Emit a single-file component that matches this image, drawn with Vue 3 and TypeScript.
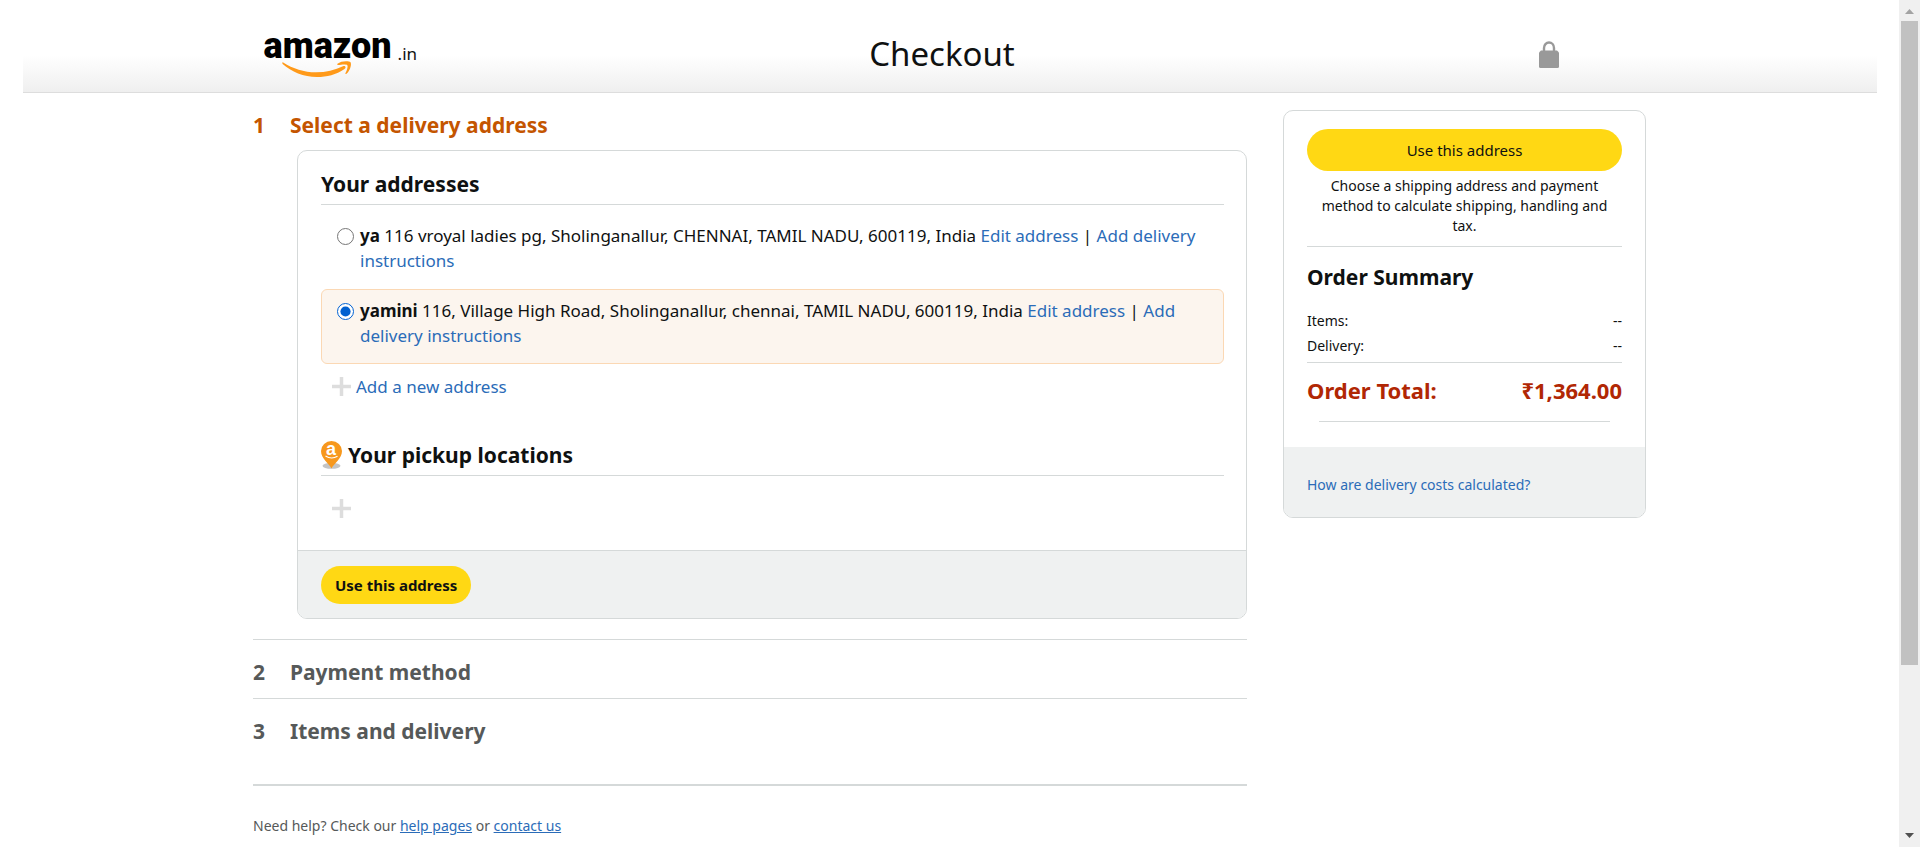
<script setup lang="ts">
import { ref } from 'vue'

interface Address {
  id: string
  name: string
  text: string
}

const addresses: Address[] = [
  { id: 'ya', name: 'ya', text: '116 vroyal ladies pg, Sholinganallur, CHENNAI, TAMIL NADU, 600119, India' },
  { id: 'yamini', name: 'yamini', text: '116, Village High Road, Sholinganallur, chennai, TAMIL NADU, 600119, India' },
]
const selected = ref<string>('yamini')

const nextSteps = [
  { number: 2, title: 'Payment method' },
  { number: 3, title: 'Items and delivery' },
]
</script>

<template>
  <div class="window">
    <div class="page">
      <header class="header">
        <div class="container header-row">
          <a class="logo" href="#" aria-label="amazon.in">
            <span class="logo-mark">
              <span class="logo-word">amazon</span>
              <svg class="smile" viewBox="0 0 70 16" width="70" height="16" aria-hidden="true">
                <path d="M1.200 1.500C11 7.800 22 11.300 34 11.300 44 11.300 53 9 61 5.200 63.500 4.200 64.500 6.800 62.500 8 54 13.800 45 16 35 16 21.500 16 9.500 10.800 0.600 3 0 2 .3 1 1.200 1.500Z" fill="#ff9a1a" />
                <path d="M55.500 2.800C59 -.3 67 -.3 68.500 1.300 70 3.500 67.500 10.500 64.500 12.800 63.700 13.300 63 13 63.400 12.200 64.600 9.800 66.300 5.500 65.300 4.200 64 3 59 3.700 56.200 4.100 55.300 4.200 54.800 3.300 55.500 2.800Z" fill="#ff9a1a" />
              </svg>
            </span>
            <span class="logo-tld">.in</span>
          </a>
          <h1>Checkout</h1>
          <svg class="lock" viewBox="0 0 20 27" width="20" height="27" role="img" aria-label="Secure">
            <path d="M5 11V7a5 5.500 0 0 1 10 0v4" fill="none" stroke="#999" stroke-width="2.400" />
            <path d="M2 9.500h16l2 2V25.500a1.500 1.500 0 0 1-1.500 1.500h-17A1.500 1.500 0 0 1 0 25.500V11.500Z" fill="#999" />
          </svg>
        </div>
      </header>

      <div class="container columns">
        <main>
          <h2 class="step step-active"><span class="number">1</span>Select a delivery address</h2>

          <section class="card address-card">
            <div class="card-body">
              <h3 class="title">Your addresses</h3>
              <div class="address-list">
                <div
                  v-for="a in addresses"
                  :key="a.id"
                  class="address"
                  :class="{ chosen: selected === a.id }"
                >
                  <input :id="a.id" v-model="selected" type="radio" name="address" :value="a.id" />
                  <div>
                    <label :for="a.id"><b>{{ a.name }}</b> {{ a.text }}</label>
                    {{ ' ' }}<a href="#">Edit address</a> | <a href="#">Add delivery instructions</a>
                  </div>
                </div>
              </div>
              <div class="add-row">
                <svg class="plus" viewBox="0 0 19 19" width="19" height="19" aria-hidden="true">
                  <path d="M9.500 0v19M0 9.500h19" stroke="#ddd" stroke-width="3.500" />
                </svg>
                <a href="#">Add a new address</a>
              </div>

              <h3 class="title pickup">
                <svg class="pin" viewBox="0 0 21 28" width="21" height="28" aria-hidden="true">
                  <ellipse cx="10.500" cy="24.800" rx="9" ry="3" fill="#c4c4c4" />
                  <path d="M10.500 27.500C8 22.500 0 17.500 0 10A10.500 10 0 0 1 21 10C21 17.500 13 22.500 10.500 27.500Z" fill="#f7981d" />
                  <text x="10" y="13.500" text-anchor="middle" class="pin-letter">a</text>
                  <path d="M4.500 15c4 2.600 8 2.600 12 .3" fill="none" stroke="#fff" stroke-width="1.200" />
                </svg>
                Your pickup locations
              </h3>
              <div class="add-row">
                <svg class="plus" viewBox="0 0 19 19" width="19" height="19" aria-hidden="true">
                  <path d="M9.500 0v19M0 9.500h19" stroke="#ddd" stroke-width="3.500" />
                </svg>
              </div>
            </div>
            <div class="card-foot">
              <button type="button" class="btn btn-small">Use this address</button>
            </div>
          </section>

          <h2 v-for="s in nextSteps" :key="s.number" class="step step-next">
            <span class="number">{{ s.number }}</span>{{ s.title }}
          </h2>

          <p class="help">Need help? Check our <a href="#">help pages</a> or <a href="#">contact us</a></p>
        </main>

        <aside class="card summary">
          <div class="summary-body">
            <button type="button" class="btn btn-wide">Use this address</button>
            <p class="note">Choose a shipping address and payment method to calculate shipping, handling and tax.</p>
            <h3>Order Summary</h3>
            <dl>
              <div class="line"><dt>Items:</dt><dd>--</dd></div>
              <div class="line"><dt>Delivery:</dt><dd>--</dd></div>
              <div class="line total"><dt>Order Total:</dt><dd>₹1,364.00</dd></div>
            </dl>
            <hr />
          </div>
          <div class="summary-foot"><a href="#">How are delivery costs calculated?</a></div>
        </aside>
      </div>
    </div>

    <div class="scrollbar" aria-hidden="true">
      <svg viewBox="0 0 9 5" width="9" height="5"><path d="M0 5 4.500 0 9 5Z" fill="#a3a3a3" /></svg>
      <div class="track"><div class="thumb"></div></div>
      <svg viewBox="0 0 9 5" width="9" height="5"><path d="M0 0 4.500 5 9 0Z" fill="#505050" /></svg>
    </div>
  </div>
</template>

<style>
body {
  margin: 0;
  background: #fff;
}
</style>

<style scoped>
* {
  box-sizing: border-box;
}
.window {
  display: grid;
  grid-template-columns: minmax(0, 1fr) 21px;
  font-family: "Noto Sans", "Open Sans", sans-serif;
  font-size: 17px;
  line-height: 25px;
  color: #0f1111;
}
h1, h2, h3, p, dl, dd {
  margin: 0;
}
a {
  color: #2b6cb8;
  text-decoration: none;
}
.container {
  max-width: 1393px;
  margin: 0 auto;
}
.header {
  margin: 0 22px 0 23px;
  background: linear-gradient(#fff 60%, #efefef);
  border-bottom: 1px solid #ddd;
}
.header-row {
  display: grid;
  grid-template-columns: 1fr auto 1fr;
  align-items: center;
  height: 92px;
  padding: 16px 26px 0 10px;
}
.logo {
  display: flex;
  align-items: flex-start;
  gap: 6px;
  color: #111;
}
.logo-mark {
  display: flex;
  flex-direction: column;
}
.logo-word {
  font: 900 36px/30px Roboto, "Liberation Sans", sans-serif;
  color: #000;
}
.smile {
  margin-left: 18px;
}
.logo-tld {
  font-size: 17px;
  line-height: 46px;
}
h1 {
  font-size: 33px;
  line-height: 44px;
  font-weight: 400;
}
.lock {
  justify-self: end;
  margin-right: 62px;
}
.columns {
  display: grid;
  grid-template-columns: minmax(0, 994fr) minmax(0, 363fr);
  align-items: start;
  gap: 36px;
  padding-top: 17px;
}
.step {
  display: flex;
  font-size: 21px;
  line-height: 30px;
  font-weight: 700;
  color: #565959;
}
.number {
  width: 37px;
}
.step-active {
  padding-bottom: 10px;
  color: #c45500;
}
.card {
  border: 1px solid #d5d9d9;
  border-radius: 10px;
  overflow: hidden;
}
.address-card {
  margin: 0 0 20px 44px;
}
.card-body {
  padding: 18px 22px 19px 23px;
}
.title {
  padding-bottom: 5px;
  border-bottom: 1px solid #d5d9d9;
  font-size: 21px;
  line-height: 30px;
}
.address-list {
  padding-top: 9px;
}
.address {
  display: flex;
  gap: 6px;
  padding: 8px 15px 15px;
  border: 1px solid transparent;
  border-radius: 6px;
}
.address.chosen {
  background: #fcf5ee;
  border-color: #fbd8b4;
}
.address input {
  flex: none;
  width: 17px;
  height: 17px;
  margin: 5px 0 0;
  accent-color: #0060d0;
}
.add-row {
  display: flex;
  align-items: center;
  gap: 5px;
  min-height: 45px;
  padding-left: 11px;
}
.pickup {
  display: flex;
  align-items: center;
  gap: 6px;
  margin: 31px 0 10px;
}
.pin {
  overflow: visible;
}
.pin-letter {
  font: bold 18px "Liberation Sans", sans-serif;
  fill: #fff;
}
.card-foot {
  padding: 15px 23px 14px;
  background: #eff1f1;
  border-top: 1px solid #d5d9d9;
}
.btn {
  border: 0;
  border-radius: 21px;
  background: #ffd814;
  color: #0f1111;
  font-family: inherit;
  font-size: 15px;
}
.btn-small {
  height: 38px;
  padding: 0 14px;
  font-weight: 700;
}
.btn-wide {
  width: 100%;
  height: 42px;
}
.step-next {
  padding: 17px 0 11px;
  border-top: 1px solid #d5d9d9;
}
.help {
  margin-top: 27px;
  padding-top: 26px;
  border-top: 2px solid #d5d9d9;
  color: #565959;
  font-size: 14px;
  line-height: 28px;
}
.help a {
  text-decoration: underline;
}
.summary-body {
  padding: 18px 23px 25px;
}
.note {
  padding: 5px 8px 10px;
  font-size: 14px;
  line-height: 20px;
  text-align: center;
}
.summary h3 {
  padding: 15px 0 16px;
  border-top: 1px solid #d5d9d9;
  font-size: 21px;
  line-height: 30px;
}
.line {
  display: flex;
  justify-content: space-between;
  font-size: 14px;
  line-height: 25px;
}
.total {
  margin-top: 4px;
  padding: 12px 0 16px;
  border-top: 1px solid #d5d9d9;
  color: #b12704;
  font-size: 22px;
  line-height: 30px;
  font-weight: 700;
}
hr {
  margin: 0 12px;
  border: 0;
  border-top: 1px solid #d5d9d9;
}
.summary-foot {
  padding: 25px 23px 20px;
  background: #eff1f1;
  font-size: 14px;
}
.scrollbar {
  display: flex;
  flex-direction: column;
  align-items: center;
  gap: 7px;
  height: 100vh;
  padding: 9px 0;
  background: #f0f0f0;
}
.track {
  flex: 1;
  width: 17px;
}
.thumb {
  height: 80%;
  background: #c1c1c1;
}
</style>
